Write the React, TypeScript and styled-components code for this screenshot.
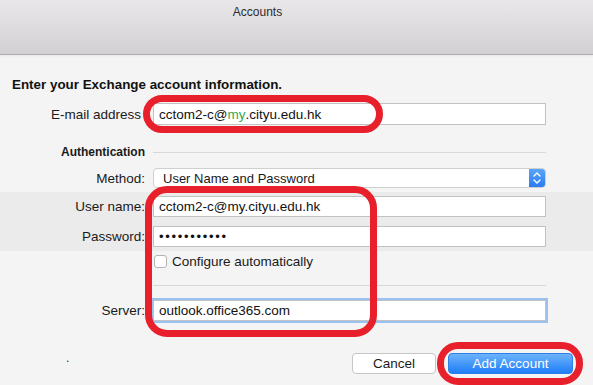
import React from "react";
import styled, { createGlobalStyle } from "styled-components";

const GlobalStyle = createGlobalStyle`
  html, body {
    margin: 0;
    padding: 0;
    background: #f4f4f4;
  }
  body {
    font-family: "Liberation Sans", Arial, sans-serif;
    color: #1a1a1a;
  }
`;

const App: React.FC = () => {
  return (
    <Page>
      <GlobalStyle />
      <TitleBar>
        <Title>Accounts</Title>
      </TitleBar>
      <Heading>Enter your Exchange account information.</Heading>

      <Row $top={10}>
        <Label $inset={4}>E-mail address</Label>
        <Field $h={22}>
          cctom2-c@<Green>my</Green>.cityu.edu.hk
        </Field>
      </Row>

      <Row $top={20}>
        <Section>Authentication</Section>
        <Rule />
      </Row>

      <Row $top={9}>
        <Label>Method:</Label>
        <Popup>
          <PopupText>User Name and Password</PopupText>
          <Stepper>
            <svg width="10" height="14" viewBox="0 0 10 14">
              <path
                d="M2 5 L5 2 L8 5 M2 9 L5 12 L8 9"
                fill="none"
                stroke="#fff"
                strokeWidth="1.4"
                strokeLinecap="round"
                strokeLinejoin="round"
              />
            </svg>
          </Stepper>
        </Popup>
      </Row>

      <Band>
        <Row>
          <Label>User name:</Label>
          <Field $h={21}>cctom2-c@my.cityu.edu.hk</Field>
        </Row>
        <Row $top={9}>
          <Label>Password:</Label>
          <Field $h={21}>
            <Dots>•••••••••••</Dots>
          </Field>
        </Row>
      </Band>

      <Row $top={2}>
        <span />
        <Check>
          <Box />
          Configure automatically
        </Check>
      </Row>

      <Row $top={16}>
        <span />
        <Rule />
      </Row>

      <Row $top={14}>
        <Label>Server:</Label>
        <Field $h={21} $focus>
          outlook.office365.com
        </Field>
      </Row>

      <Footer>
        <Dot>.</Dot>
        <Buttons>
          <Button>Cancel</Button>
          <Button $primary>Add Account</Button>
        </Buttons>
      </Footer>

      <Mark $x={143} $y={95} $w={240} $h={38} $r={19} />
      <Mark $x={145} $y={186} $w={232} $h={151} $r={22} />
      <Mark $x={437} $y={342} $w={146} $h={43} $r={21} />
    </Page>
  );
};

const Page = styled.div`
  position: relative;
  width: 593px;
  height: 385px;
  overflow: hidden;
  background: #f4f4f4;
`;

const TitleBar = styled.div`
  height: 54px;
  background: linear-gradient(#e9e7e9, #d2d0d2);
  border-bottom: 1px solid #b0aeb0;
  box-shadow: 0 1px 2px rgba(0, 0, 0, 0.06);
`;

const Title = styled.div`
  width: 515px;
  padding-top: 5px;
  text-align: center;
  font-size: 12px;
  line-height: 14px;
  color: #2b2b2b;
`;

const Heading = styled.div`
  margin: 22px 0 0 12px;
  font-size: 13.4px;
  line-height: 16px;
  font-weight: bold;
  color: #111;
`;

const Row = styled.div<{ $top?: number }>`
  display: grid;
  grid-template-columns: 145px 393px;
  column-gap: 8px;
  align-items: center;
  margin-top: ${(p) => p.$top ?? 0}px;
`;

const Label = styled.div<{ $inset?: number }>`
  text-align: right;
  padding-right: ${(p) => p.$inset ?? 0}px;
  font-size: 13.5px;
  color: #1a1a1a;
  white-space: nowrap;
`;

const Field = styled.div<{ $h: number; $focus?: boolean }>`
  box-sizing: border-box;
  height: ${(p) => p.$h}px;
  display: flex;
  align-items: center;
  padding-left: 5px;
  background: #fff;
  border: 1px solid #c2c2c2;
  font-size: 13.5px;
  color: #111;
  white-space: nowrap;
  box-shadow: ${(p) => (p.$focus ? "0 0 0 2px #9bc1f0" : "none")};
`;

const Green = styled.span`
  color: #35a853;
`;

const Dots = styled.span`
  font-size: 13px;
  letter-spacing: 1.7px;
`;

const Section = styled.div`
  text-align: right;
  font-size: 12px;
  line-height: 14px;
  font-weight: bold;
  color: #1a1a1a;
`;

const Rule = styled.div`
  height: 1px;
  background: #d8d8d8;
`;

const Popup = styled.div`
  box-sizing: border-box;
  height: 20px;
  display: flex;
  align-items: stretch;
  background: #fff;
  border: 1px solid #cfcfcf;
  border-radius: 4px;
  overflow: hidden;
`;

const PopupText = styled.div`
  flex: 1;
  display: flex;
  align-items: center;
  padding-left: 9px;
  font-size: 13px;
  color: #1a1a1a;
`;

const Stepper = styled.div`
  width: 16px;
  display: flex;
  align-items: center;
  justify-content: center;
  background: linear-gradient(#5aa5f8, #2a7cf2);
`;

const Band = styled.div`
  margin-top: 4px;
  padding: 4px 0;
  background: #ebebeb;
`;

const Check = styled.label`
  display: flex;
  align-items: center;
  height: 16px;
  gap: 5px;
  font-size: 13.5px;
  color: #1a1a1a;
`;

const Box = styled.span`
  box-sizing: border-box;
  width: 13px;
  height: 13px;
  margin-left: 1px;
  background: #fff;
  border: 1px solid #b4b4b4;
  border-radius: 3px;
`;

const Footer = styled.div`
  display: flex;
  align-items: center;
  justify-content: space-between;
  margin-top: 32px;
  padding: 0 20px 0 66px;
`;

const Dot = styled.span`
  font-size: 12px;
  line-height: 10px;
  color: #333;
  align-self: flex-start;
`;

const Buttons = styled.div`
  display: flex;
  gap: 12px;
`;

const Button = styled.button<{ $primary?: boolean }>`
  box-sizing: border-box;
  height: 21px;
  width: ${(p) => (p.$primary ? 125 : 84)}px;
  padding: 0;
  font-family: "Liberation Sans", Arial, sans-serif;
  font-size: 13.5px;
  border-radius: 4px;
  color: ${(p) => (p.$primary ? "#fff" : "#1a1a1a")};
  background: ${(p) =>
    p.$primary ? "linear-gradient(#6db3fb, #1f7ef7)" : "#fff"};
  border: 1px solid ${(p) => (p.$primary ? "#2f7de6" : "#c6c6c6")};
`;

const Mark = styled.div<{ $x: number; $y: number; $w: number; $h: number; $r: number }>`
  position: absolute;
  box-sizing: border-box;
  left: ${(p) => p.$x}px;
  top: ${(p) => p.$y}px;
  width: ${(p) => p.$w}px;
  height: ${(p) => p.$h}px;
  border: 7px solid #e8202b;
  border-radius: ${(p) => p.$r}px;
  pointer-events: none;
`;

export default App;
